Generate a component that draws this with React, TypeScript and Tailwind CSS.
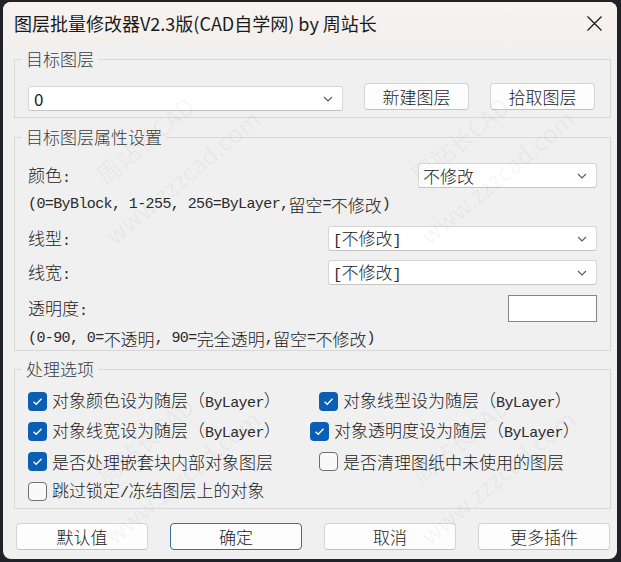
import clsx from 'clsx'
import type { ReactNode } from 'react'

// SimSun-like text: ASCII runs in a half-width mono, the rest in the CJK face
function Sim({ text }: { text: string }) {
  const parts = text.split(/([\x20-\x7e]+)/)
  return (
    <>
      {parts.map((p, i) =>
        !p ? null : i % 2 === 1 ? (
          <span key={i} className="font-['Liberation_Mono',monospace] text-[15px] tracking-[-0.6px] text-[#2a2a2a]">
            {p}
          </span>
        ) : (
          <span key={i}>{p}</span>
        )
      )}
    </>
  )
}

function Chevron() {
  return (
    <svg width="10" height="6" viewBox="0 0 10 6" className="shrink-0">
      <polyline points="1,1 5,5 9,1" fill="none" stroke="#5a5a5a" strokeWidth="1.1" />
    </svg>
  )
}

function Select({ value, className, sans }: { value: string; className?: string; sans?: boolean }) {
  return (
    <div
      className={clsx(
        'flex h-[25px] items-center justify-between rounded-[3px] border border-[#d6d6d6] border-b-[#c4c4c4] bg-white pr-[9px] text-[17px] text-[#1b1b1b]',
        sans ? 'pl-[5px]' : 'pl-[4px]',
        className
      )}
    >
      <span className="leading-none">{sans ? value : <Sim text={value} />}</span>
      <Chevron />
    </div>
  )
}

function Button({ children, primary, className }: { children: ReactNode; primary?: boolean; className?: string }) {
  return (
    <div
      className={clsx(
        'flex h-[27px] items-center justify-center rounded-[4px] border text-[17px] font-light leading-none text-[#1b1b1b]',
        primary ? 'border-[#3a6f9e] bg-[#fdfdfd]' : 'border-[#d4d4d4] border-b-[#c2c2c2] bg-[#fdfdfd]',
        className
      )}
    >
      {children}
    </div>
  )
}

function Check({ label, checked, className }: { label: string; checked?: boolean; className?: string }) {
  return (
    <div className={clsx('flex h-[30px] items-center', className)}>
      {checked ? (
        <div className="flex h-[19px] w-[19px] shrink-0 items-center justify-center rounded-[4px] bg-[#0a5fb4]">
          <svg width="13" height="13" viewBox="0 0 13 13">
            <polyline points="2.5,6.8 5.2,9.3 10.5,3.8" fill="none" stroke="#ffffff" strokeWidth="1.3" />
          </svg>
        </div>
      ) : (
        <div className="h-[19px] w-[19px] shrink-0 rounded-[4px] border border-[#707070] bg-[#f9f9f9]" />
      )}
      <span className="ml-[5px] whitespace-nowrap text-[17px] font-light leading-none text-[#1b1b1b]">
        <Sim text={label} />
      </span>
    </div>
  )
}

function Group({ title, children, className }: { title: string; children: ReactNode; className?: string }) {
  return (
    <fieldset className={clsx('ml-[11px] mr-[6px] border border-[#d8d8d8] px-[13px]', className)}>
      <legend className="-ml-[6px] h-[24px] px-[4px] text-[17px] font-light leading-[24px] text-[#3a3a3a]">{title}</legend>
      {children}
    </fieldset>
  )
}

function Watermark({ className }: { className: string }) {
  return (
    <div className={clsx('absolute origin-bottom-left -rotate-[40deg] text-[24px] leading-[30px] whitespace-nowrap text-black/[0.05]', className)}>
      <div className="pl-[32px]">周站长CAD</div>
      <div className="mt-[22px]">www.zzzcad.com</div>
    </div>
  )
}

function Row({ label, children, className }: { label: string; children: ReactNode; className?: string }) {
  return (
    <div className={clsx('flex items-center justify-between text-[17px] font-light text-[#1b1b1b]', className)}>
      <span className="leading-none"><Sim text={label} /></span>
      {children}
    </div>
  )
}

export default function App() {
  return (
    <div className="h-[562px] w-[621px] overflow-hidden bg-[#202228] pl-[3px] pt-[2px] font-['Noto_Sans_CJK_SC',sans-serif]">
      <div className="relative flex h-[557px] w-[614px] flex-col overflow-hidden rounded-[8px] bg-[#f0f0f0]">
        <div className="flex h-[44px] shrink-0 items-center justify-between bg-gradient-to-b from-[#f8f3f0] to-[#f2efed] pb-[2px] pl-[11px] pr-[15px]">
          <span className="text-[18px] leading-none text-[#1a1a1a]">图层批量修改器V2.3版(CAD自学网) by 周站长</span>
          <svg width="15" height="15" viewBox="0 0 15 15">
            <path d="M0.5 0.5 L14.5 14.5 M14.5 0.5 L0.5 14.5" stroke="#1a1a1a" strokeWidth="1.3" />
          </svg>
        </div>

        <Group title="目标图层" className="mt-[1px] pb-[6px]">
          <div className="mt-[12px] flex items-start">
            <Select value="0" sans className="mt-[3px] w-[315px]" />
            <Button className="ml-[21px] w-[105px]">新建图层</Button>
            <Button className="ml-[21px] w-[105px]">拾取图层</Button>
          </div>
        </Group>

        <Group title="目标图层属性设置" className="mt-[7px]">
          <Row label="颜色:" className="mt-[14px] h-[25px]">
            <Select value="不修改" className="w-[179px]" />
          </Row>
          <div className="mt-[4px] flex h-[24px] items-center text-[17px] font-light leading-none text-[#1b1b1b]">
            <Sim text="(0=ByBlock, 1-255, 256=ByLayer, 留空=不修改)" />
          </div>
          <Row label="线型:" className="mt-[10px] h-[25px]">
            <Select value="[不修改]" className="w-[269px]" />
          </Row>
          <Row label="线宽:" className="mt-[9px] h-[25px]">
            <Select value="[不修改]" className="w-[269px]" />
          </Row>
          <Row label="透明度:" className="mt-[10px] h-[27px]">
            <div className="h-[27px] w-[89px] border border-[#858585] bg-white" />
          </Row>
          <div className="mt-[4px] flex h-[24px] items-center text-[17px] font-light leading-none text-[#1b1b1b]">
            <Sim text="(0-90, 0=不透明, 90=完全透明, 留空=不修改)" />
          </div>
        </Group>

        <Group title="处理选项" className="mt-[6px] pb-[2px]">
          <div className="mt-[5px] flex">
            <Check checked label="对象颜色设为随层（ByLayer）" className="w-[291px]" />
            <Check checked label="对象线型设为随层（ByLayer）" />
          </div>
          <div className="flex">
            <Check checked label="对象线宽设为随层（ByLayer）" className="w-[282px]" />
            <Check checked label="对象透明度设为随层（ByLayer）" />
          </div>
          <div className="flex">
            <Check checked label="是否处理嵌套块内部对象图层" className="w-[291px]" />
            <Check label="是否清理图纸中未使用的图层" />
          </div>
          <div className="flex">
            <Check label="跳过锁定/冻结图层上的对象" />
          </div>
        </Group>

        <div className="mt-[14px] flex gap-[22px] pl-[13px]">
          <Button className="w-[132px]">默认值</Button>
          <Button primary className="w-[132px]">确定</Button>
          <Button className="w-[132px]">取消</Button>
          <Button className="w-[132px]">更多插件</Button>
        </div>

        <div className="pointer-events-none absolute inset-0">
          <Watermark className="left-[115px] top-[166px]" />
          <Watermark className="left-[430px] top-[166px]" />
          <Watermark className="left-[115px] top-[466px]" />
          <Watermark className="left-[430px] top-[466px]" />
        </div>
      </div>
    </div>
  )
}
